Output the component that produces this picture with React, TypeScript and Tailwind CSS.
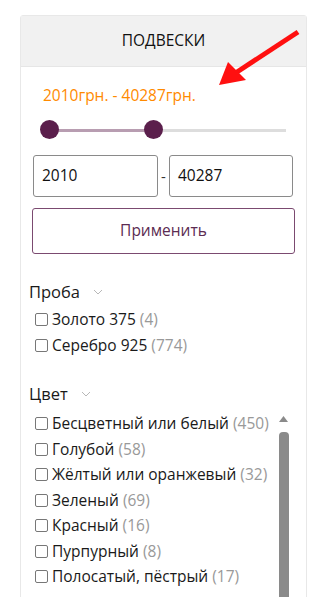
import React from "react";

const font = { fontFamily: '"Open Sans", "Noto Sans", sans-serif' };

function Check() {
  return <span className="inline-block w-[13px] h-[13px] border border-[#777] rounded-[2px] bg-white shrink-0" />;
}

function Row({ label, count }: { label: string; count: number }) {
  return (
    <div className="flex items-center h-[25.5px] pl-[6px] whitespace-nowrap">
      <Check />
      <span className="ml-[4px] text-[15.5px] text-[#1a1a1a]">
        {label} <span className="text-[#999]">({count})</span>
      </span>
    </div>
  );
}

function Chevron() {
  return (
    <svg width="10" height="6" viewBox="0 0 10 6" className="ml-[13px]">
      <polyline points="1,1 5,5 9,1" fill="none" stroke="#b8b8b8" strokeWidth="1" />
    </svg>
  );
}

export default function App() {
  const colors: [string, number][] = [
    ["Бесцветный или белый", 450],
    ["Голубой", 58],
    ["Жёлтый или оранжевый", 32],
    ["Зеленый", 69],
    ["Красный", 16],
    ["Пурпурный", 8],
    ["Полосатый, пёстрый", 17],
  ];
  return (
    <div className="relative w-[323px] h-[597px] overflow-hidden bg-white" style={font}>
      <div className="ml-[20px] mt-[15px] w-[287px] border border-[#e8e8e8] rounded-t-[3px]">
        <div className="h-[51px] bg-[#f1f1f1] border-b border-[#e6e6e6] flex items-center justify-center text-[15.5px] font-medium text-[#111]">
          ПОДВЕСКИ
        </div>
        <div className="px-[8px]">
          <div className="mt-[18px] ml-[14px] h-[20px] leading-[20px] text-[15.5px] text-[#ff8a00]">
            2010грн. - 40287грн.
          </div>
          <div className="relative mt-[15px] ml-[11px] w-[246px] h-[20px]">
            <div className="absolute left-[9px] right-0 top-[9px] h-[3px] bg-[#dddddd]" />
            <div className="absolute left-[9px] w-[104px] top-[9px] h-[3px] bg-[#b89db1]" />
            <div className="absolute left-0 top-0 w-[19px] h-[19px] rounded-full bg-[#5b1f4c]" />
            <div className="absolute left-[104px] top-0 w-[19px] h-[19px] rounded-full bg-[#5b1f4c]" />
          </div>
          <div className="mx-[3px]">
            <div className="mt-[15px] flex items-center mx-[1px]">
              <div className="w-[125px] h-[42px] border border-[#8a8a8a] rounded-[3px] flex items-center pl-[8px] text-[15.5px] text-[#111]">
                2010
              </div>
              <div className="w-[11px] text-center text-[15px] text-[#333]">-</div>
              <div className="w-[124px] h-[42px] border border-[#8a8a8a] rounded-[3px] flex items-center pl-[8px] text-[15.5px] text-[#111]">
                40287
              </div>
            </div>
            <div className="mt-[11px] h-[46px] border border-[#7b4a70] rounded-[3px] flex items-center justify-center text-[15.5px] text-[#5c2c52]">
              Применить
            </div>
          </div>
          <div className="mt-[26px] h-[24px] flex items-center text-[16.5px] text-[#1a1a1a]">
            Проба
            <Chevron />
          </div>
          <div className="mt-[3px]">
            <Row label="Золото 375" count={4} />
            <Row label="Серебро 925" count={774} />
          </div>
          <div className="mt-[24px] h-[24px] flex items-center text-[16.5px] text-[#1a1a1a]">
            Цвет
            <Chevron />
          </div>
          <div className="mt-[5px] flex mr-[9px] h-[200px]">
            <div className="flex-1 overflow-hidden">
              {colors.map(([l, c]) => (
                <Row key={l} label={l} count={c} />
              ))}
              <div className="h-[25.5px] pl-[6px] pt-[6px]">
                <Check />
              </div>
            </div>
            <div className="w-[11px] flex flex-col items-center">
              <svg width="9" height="6" viewBox="0 0 9 6" className="mt-[5px]">
                <polygon points="0,6 4.5,0 9,6" fill="#8a8a8a" />
              </svg>
              <div className="mt-[10px] w-[10px] flex-1 bg-[#8a8a8a] rounded-t-[4px]" />
            </div>
          </div>
        </div>
      </div>
      <svg className="absolute left-0 top-0 pointer-events-none" width="323" height="597">
        <line x1="298" y1="32" x2="234" y2="74" stroke="#ff1010" strokeWidth="5" />
        <polygon points="219,85 228,62 246,80" fill="#ff1010" />
      </svg>
    </div>
  );
}
